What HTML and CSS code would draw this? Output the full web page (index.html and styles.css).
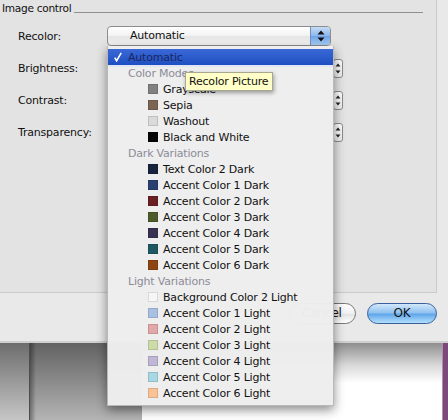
FILE: index.html
```html
<!DOCTYPE html>
<html>
<head>
<meta charset="utf-8">
<link rel="stylesheet" href="styles.css">
</head>
<body>
<div class="screen">
  <div class="dialog">
    <div class="panel">
      <div class="group-head">
        <span class="group-title">Image control</span>
        <span class="group-line"></span>
      </div>
      <div class="rows">
        <div class="row">
          <span class="label">Recolor:</span>
          <div class="popup">
            <span class="popup-text">Automatic</span>
            <span class="popup-arrows">
              <svg width="8" height="12" viewBox="0 0 8 12"><path d="M4 0.5 L7.5 4.5 L0.5 4.5 Z" fill="#111"/><path d="M4 11.5 L7.5 7.5 L0.5 7.5 Z" fill="#111"/></svg>
            </span>
          </div>
        </div>
        <div class="row">
          <span class="label">Brightness:</span>
          <div class="ctl"><span class="stepper"><svg width="6" height="11" viewBox="0 0 6 11"><path d="M3 0.5 L5.5 3.5 L0.5 3.5 Z" fill="#222"/><path d="M3 10.5 L5.5 7.5 L0.5 7.5 Z" fill="#222"/></svg></span></div>
        </div>
        <div class="row">
          <span class="label">Contrast:</span>
          <div class="ctl"><span class="stepper"><svg width="6" height="11" viewBox="0 0 6 11"><path d="M3 0.5 L5.5 3.5 L0.5 3.5 Z" fill="#222"/><path d="M3 10.5 L5.5 7.5 L0.5 7.5 Z" fill="#222"/></svg></span></div>
        </div>
        <div class="row">
          <span class="label">Transparency:</span>
          <div class="ctl"><span class="stepper"><svg width="6" height="11" viewBox="0 0 6 11"><path d="M3 0.5 L5.5 3.5 L0.5 3.5 Z" fill="#222"/><path d="M3 10.5 L5.5 7.5 L0.5 7.5 Z" fill="#222"/></svg></span></div>
        </div>
      </div>
    </div>
    <div class="buttons">
      <span class="btn btn-cancel">Cancel</span>
      <span class="btn btn-ok">OK</span>
    </div>
  </div>
  <div class="doc">
    <div class="doc-left"></div>
    <div class="doc-mid"></div>
    <div class="doc-page"></div>
    <div class="doc-purple"></div>
  </div>

  <div class="menu">
    <div class="item selected">
      <svg class="check" width="8" height="10" viewBox="0 0 8 10"><path d="M0.8 5.6 L2.6 8.8 L7.2 0.8" fill="none" stroke="#fff" stroke-width="1.6"/></svg>
      <span class="head-text">Automatic</span>
    </div>
    <div class="item header">Color Modes</div>
    <div class="item"><span class="sw" style="background:#808080"></span>Grayscale</div>
    <div class="item"><span class="sw" style="background:#7b6452"></span>Sepia</div>
    <div class="item"><span class="sw" style="background:#dadada"></span>Washout</div>
    <div class="item"><span class="sw" style="background:#050505"></span>Black and White</div>
    <div class="item header">Dark Variations</div>
    <div class="item"><span class="sw" style="background:#17243e"></span>Text Color 2 Dark</div>
    <div class="item"><span class="sw" style="background:#2a4070"></span>Accent Color 1 Dark</div>
    <div class="item"><span class="sw" style="background:#6a1f22"></span>Accent Color 2 Dark</div>
    <div class="item"><span class="sw" style="background:#4d5b2b"></span>Accent Color 3 Dark</div>
    <div class="item"><span class="sw" style="background:#3a3152"></span>Accent Color 4 Dark</div>
    <div class="item"><span class="sw" style="background:#1f5862"></span>Accent Color 5 Dark</div>
    <div class="item"><span class="sw" style="background:#8e4412"></span>Accent Color 6 Dark</div>
    <div class="item header">Light Variations</div>
    <div class="item"><span class="sw" style="background:#f6f6f6"></span>Background Color 2 Light</div>
    <div class="item"><span class="sw" style="background:#a9c0e3"></span>Accent Color 1 Light</div>
    <div class="item"><span class="sw" style="background:#e2a7a8"></span>Accent Color 2 Light</div>
    <div class="item"><span class="sw" style="background:#ccdba8"></span>Accent Color 3 Light</div>
    <div class="item"><span class="sw" style="background:#c0b6d6"></span>Accent Color 4 Light</div>
    <div class="item"><span class="sw" style="background:#a7d8e4"></span>Accent Color 5 Light</div>
    <div class="item"><span class="sw" style="background:#fbc395"></span>Accent Color 6 Light</div>
  </div>

  <div class="tooltip">Recolor Picture</div>
</div>
</body>
</html>
```
FILE: styles.css
```css
html, body {
  margin: 0;
  padding: 0;
}
body {
  width: 448px;
  height: 420px;
  overflow: hidden;
  font-family: "DejaVu Sans", sans-serif;
  font-size: 11px;
  letter-spacing: -0.2px;
  color: #111;
  background: #e9e9e9;
}
.screen {
  position: relative;
  width: 448px;
  height: 420px;
  overflow: hidden;
}
.dialog {
  height: 341px;
  background: #e9e9e9;
  border-bottom: 2px solid #cfcfcf;
}
.panel {
  width: 436px;
  height: 292px;
  background: #e3e3e3;
  border-right: 1px solid #cacaca;
  border-bottom: 1px solid #cacaca;
}
.group-head {
  display: flex;
  height: 16px;
  padding-left: 2px;
}
.group-title {
  font-size: 10.6px;
  letter-spacing: -0.3px;
  line-height: 16px;
}
.group-line {
  flex: 1;
  height: 0;
  margin: 12px 13px 0 3px;
  border-top: 1px solid #8f8f8f;
}
.rows {
  display: flex;
  flex-direction: column;
  gap: 12px;
  padding-top: 10px;
}
.row {
  display: flex;
  align-items: center;
  height: 20px;
  padding-left: 18px;
}
.label {
  width: 89px;
}
.popup {
  display: flex;
  width: 222px;
  height: 18px;
  border: 1px solid #8d8d8d;
  border-radius: 4px;
  background: linear-gradient(#ffffff, #f2f2f2 50%, #e4e4e4 51%, #f4f4f4);
  overflow: hidden;
}
.popup-text {
  flex: 1;
  padding-left: 22px;
  line-height: 18px;
}
.popup-arrows {
  width: 19px;
  display: flex;
  align-items: center;
  justify-content: center;
  border-left: 1px solid #6d8fc0;
  background: linear-gradient(#c6dcf6, #8cb6ea 50%, #6ea3e6 51%, #a9cff6);
}
.ctl {
  width: 236px;
  display: flex;
  justify-content: flex-end;
}
.stepper {
  width: 8px;
  height: 17px;
  display: flex;
  align-items: center;
  justify-content: center;
  border: 1px solid #8a8a8a;
  border-radius: 3px;
  background: linear-gradient(#ffffff, #ececec);
}
.buttons {
  display: flex;
  justify-content: flex-end;
  gap: 11px;
  padding: 10px 11px 0 0;
}
.btn {
  height: 19px;
  line-height: 19px;
  text-align: center;
  border-radius: 11px;
  font-size: 12px;
}
.btn-cancel {
  width: 66px;
  border: 1px solid #777;
  background: linear-gradient(#ffffff, #f0f0f0 50%, #e2e2e2 51%, #ffffff);
}
.btn-ok {
  width: 68px;
  border: 1px solid #3a5f9c;
  background: linear-gradient(#d2e8fb, #8ec0ef 48%, #5ea4ea 52%, #b2e0fd);
}
.doc {
  display: flex;
  height: 77px;
}
.doc-left {
  width: 29px;
  background: linear-gradient(#6d6d6d, #c6c6c6);
  border-right: 1px solid #4d4d4d;
}
.doc-mid {
  width: 112px;
  background:
    linear-gradient(90deg, rgba(0,0,0,0.35), rgba(0,0,0,0) 6px),
    linear-gradient(#626262, #b4b4b4);
}
.doc-page {
  flex: 1;
  background: linear-gradient(#8e8e8e, #d8d8d8 22px, #ffffff 40px);
}
.doc-purple {
  width: 5px;
  background: #7b4a7a;
  border-left: 1px solid #b08cb0;
}
.menu {
  position: absolute;
  left: 107px;
  top: 46px;
  width: 225px;
  padding: 3px 0 4px;
  background: rgba(238, 238, 238, 0.98);
  border: 1px solid rgba(0, 0, 0, 0.22);
  border-top: none;
  box-shadow: 0 4px 10px rgba(0, 0, 0, 0.45);
}
.item {
  display: flex;
  align-items: center;
  height: 16px;
  padding-left: 40px;
  white-space: nowrap;
}
.item.header {
  padding-left: 20px;
  color: #8c8c98;
}
.item.selected {
  position: relative;
  padding-left: 20px;
  color: #1a2660;
  background: linear-gradient(#3a69d6, #1f4ec2);
  box-shadow: 0 2px 0 #dfe5f2;
}
.check {
  position: absolute;
  left: 6px;
  top: 3px;
}
.sw {
  width: 8px;
  height: 8px;
  margin-right: 5px;
  border: 1px solid rgba(0, 0, 0, 0.12);
}
.tooltip {
  position: absolute;
  left: 185px;
  top: 72px;
  width: 83px;
  height: 17px;
  padding-left: 3px;
  line-height: 17px;
  background: #ffffc7;
  border: 1px solid #a8a890;
  box-shadow: 1px 2px 4px rgba(0, 0, 0, 0.35);
}
```
